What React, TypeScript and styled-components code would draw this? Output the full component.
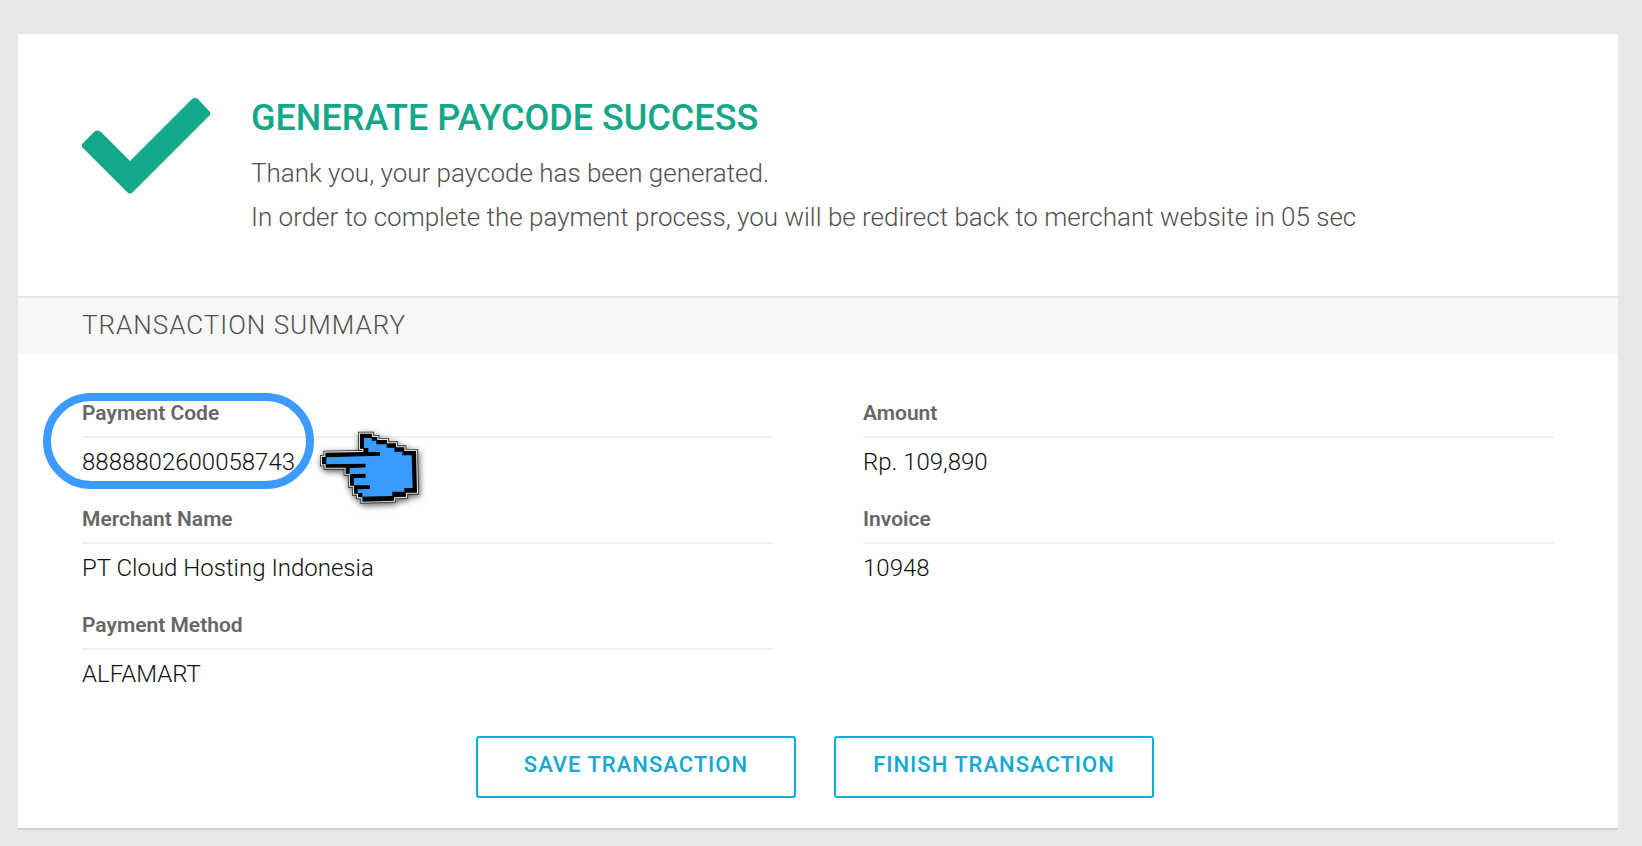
import React from "react";
import styled, { createGlobalStyle } from "styled-components";

const GlobalStyle = createGlobalStyle`
  * { box-sizing: border-box; }
  body {
    margin: 0;
    background: #e7e7e7;
    color: #666;
    font-family: Roboto, "Open Sans", sans-serif;
  }
`;

const Page = styled.div`
  padding: 34px 24px 16px 18px;
`;

const Card = styled.main`
  background: #fff;
  border-bottom: 2px solid #d2d2d2;
`;

const Banner = styled.header`
  display: flex;
  align-items: flex-start;
  gap: 41px;
  padding: 64px 64px 57px;
`;

const CheckMark = styled.svg`
  flex: none;
  width: 128px;
  height: 96px;
`;

const Title = styled.h1`
  margin: 0 0 12px;
  color: #12a889;
  font-size: 36px;
  font-weight: 500;
  line-height: 41px;
`;

const Message = styled.p`
  margin: 0;
  color: #505050;
  font-size: 26px;
  font-weight: 300;
  line-height: 44px;
`;

const SectionTitle = styled.h2`
  margin: 0;
  padding: 0 64px 2px;
  border-top: 2px solid #e5e5e5;
  background: #f7f7f7;
  color: #505050;
  font-size: 26px;
  font-weight: 300;
  line-height: 54px;
  letter-spacing: 1px;
`;

const Details = styled.dl`
  display: grid;
  grid-template-columns: 1fr 1fr;
  column-gap: 90px;
  margin: 0;
  padding: 40px 64px 24px;
`;

const Field = styled.div`
  position: relative;
  height: 106px;
`;

const Label = styled.dt`
  padding-bottom: 4px;
  border-bottom: 2px solid #f2f2f2;
  font-size: 21px;
  font-weight: 600;
  line-height: 38px;
`;

const Value = styled.dd`
  margin: 0;
  color: #111;
  font-size: 24px;
  font-weight: 300;
  line-height: 48px;
`;

const Highlight = styled.span`
  position: absolute;
  top: -1px;
  left: -39px;
  width: 271px;
  height: 96px;
  border: 8px solid #3d9bff;
  border-radius: 48px;
`;

const Pointer = styled.svg`
  position: absolute;
  top: 16px;
  left: 218px;
  width: 140px;
  height: 110px;
  overflow: visible;
  filter: drop-shadow(1px 2px 3px rgba(0, 0, 0, 0.65));
`;

const Actions = styled.div`
  display: flex;
  flex-wrap: wrap;
  justify-content: center;
  gap: 38px;
  padding: 0 70px 30px 64px;
`;

const ActionButton = styled.button`
  width: 320px;
  height: 62px;
  padding: 0 0 6px;
  border: 2px solid #00b4d5;
  border-radius: 3px;
  background: #fff;
  color: #12a9d0;
  font-family: inherit;
  font-size: 22px;
  font-weight: 500;
  letter-spacing: 1px;
  cursor: pointer;
`;

const handOutline =
  "M66 141H76V128L190 126V116H180V71H216V81H232V90H261V100H288V112H313V123H348L351 248H318V260L282 262V272L187 275V262H174V251H162V227H150V191H137V173H77V163H66Z";

const HandPointer = () => (
  <Pointer viewBox="0 0 420 330" aria-hidden="true">
    <path d={handOutline} fill="#000" stroke="#333" strokeWidth="12" />
    <path d={handOutline} fill="#000" stroke="#ddd" strokeWidth="7" />
    <path d={handOutline} fill="#000" />
    <path
      d="M79 142L240 137V126H205V114H192V84H215V92H229V103H260V113H283V125H307V136H335L338 234H313V245H277V258L187 260V249H173V238L210 237V226H162V204L197 203V192H149V175L197 172V161L79 163Z"
      fill="#389bff"
    />
  </Pointer>
);

type DetailProps = { label: string; value: string; pointed?: boolean };

const Detail = ({ label, value, pointed }: DetailProps) => (
  <Field>
    <Label>{label}</Label>
    <Value>
      {value}
      {pointed && <Highlight />}
      {pointed && <HandPointer />}
    </Value>
  </Field>
);

export default function App() {
  return (
    <>
      <GlobalStyle />
      <Page>
        <Card>
          <Banner>
            <CheckMark viewBox="0 0 128 96" aria-hidden="true">
              <path
                d="M110 1Q113 -1 116 1L128 14V17L51 94Q48 97 45 94L0 49V46L12 34Q15 31 19 34L48 63Z"
                fill="#12a889"
              />
            </CheckMark>
            <div>
              <Title>GENERATE PAYCODE SUCCESS</Title>
              <Message>Thank you, your paycode has been generated.</Message>
              <Message>
                In order to complete the payment process, you will be redirect back to merchant website in 05 sec
              </Message>
            </div>
          </Banner>
          <SectionTitle>TRANSACTION SUMMARY</SectionTitle>
          <Details>
            <Detail label="Payment Code" value="8888802600058743" pointed />
            <Detail label="Amount" value="Rp. 109,890" />
            <Detail label="Merchant Name" value="PT Cloud Hosting Indonesia" />
            <Detail label="Invoice" value="10948" />
            <Detail label="Payment Method" value="ALFAMART" />
          </Details>
          <Actions>
            <ActionButton type="button">SAVE TRANSACTION</ActionButton>
            <ActionButton type="button">FINISH TRANSACTION</ActionButton>
          </Actions>
        </Card>
      </Page>
    </>
  );
}
